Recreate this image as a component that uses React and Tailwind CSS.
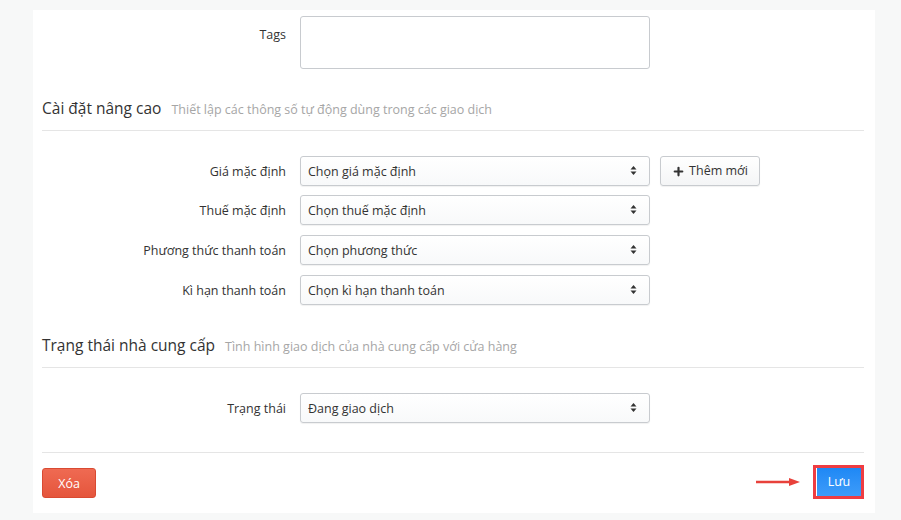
import { Plus } from "lucide-react"

function SelectBox({ value }) {
  return (
    <div className="flex h-[30px] w-[350px] items-center justify-between rounded-[3px] border border-[#c8cbcf] bg-gradient-to-b from-white to-[#f8f9fa] px-[7px] text-[12.5px] text-[#333] shadow-[0_1px_1px_rgba(0,0,0,0.06)]">
      <span className="pt-[3px]">{value}</span>
      <svg width="7" height="11" viewBox="0 0 7 11" className="mr-[5px]">
        <path d="M3.5 1 L6.5 4.5 L0.5 4.5 Z" fill="#333" />
        <path d="M3.5 10 L6.5 6.5 L0.5 6.5 Z" fill="#333" />
      </svg>
    </div>
  )
}

function Row({ label, children, className = "" }) {
  return (
    <div className={"flex items-center " + className}>
      <div className="w-[244px] pt-[4px] text-right text-[12.5px] text-[#333]">{label}</div>
      <div className="ml-[14px] flex items-center gap-[10px]">{children}</div>
    </div>
  )
}

function SectionTitle({ title, sub }) {
  return (
    <div className="flex items-baseline gap-[10px] border-b border-[#e5e5e5] pb-[10px]">
      <span className="text-[15.5px] leading-[22px] text-[#333]">{title}</span>
      <span className="text-[12.5px] text-[#a6a6a6]">{sub}</span>
    </div>
  )
}

export default function App() {
  return (
    <div
      className="h-[520px] w-[901px] bg-[#f7f8f8] pt-[10px] pl-[33px]"
      style={{ fontFamily: "'Open Sans', 'Noto Sans', sans-serif" }}
    >
      <div className="h-[503px] w-[842px] bg-white pt-[6px] pl-[9px] pr-[11px]">
        <div className="flex items-start">
          <div className="w-[244px] pt-[10px] text-right text-[12.5px] text-[#333]">Tags</div>
          <div className="ml-[14px] h-[53px] w-[350px] rounded-[3px] border border-[#c8cbcf] bg-white" />
        </div>

        <div className="mt-[28px]">
          <SectionTitle title="Cài đặt nâng cao" sub="Thiết lập các thông số tự động dùng trong các giao dịch" />
        </div>

        <div className="mt-[25px] flex flex-col gap-[9px]">
          <Row label="Giá mặc định">
            <SelectBox value="Chọn giá mặc định" />
            <button className="flex h-[30px] w-[100px] items-center justify-center gap-[4px] rounded-[3px] border border-[#c8cbcf] bg-gradient-to-b from-white to-[#f4f5f6] pt-[1px] text-[12.5px] text-[#333] shadow-[0_1px_1px_rgba(0,0,0,0.06)]">
              <Plus size={13} strokeWidth={4} />
              Thêm mới
            </button>
          </Row>
          <Row label="Thuế mặc định">
            <SelectBox value="Chọn thuế mặc định" />
          </Row>
          <Row label="Phương thức thanh toán" className="mt-[1px]">
            <SelectBox value="Chọn phương thức" />
          </Row>
          <Row label="Kì hạn thanh toán" className="mt-[1px]">
            <SelectBox value="Chọn kì hạn thanh toán" />
          </Row>
        </div>

        <div className="mt-[29px]">
          <SectionTitle title="Trạng thái nhà cung cấp" sub="Tình hình giao dịch của nhà cung cấp với cửa hàng" />
        </div>

        <div className="mt-[25px] border-b border-[#e5e5e5] pb-[29px]">
          <Row label="Trạng thái">
            <SelectBox value="Đang giao dịch" />
          </Row>
        </div>

        <div className="mt-[12px] flex items-center justify-between">
          <button className="mt-[3px] h-[30px] w-[54px] rounded-[3px] border border-[#d94a32] bg-gradient-to-b from-[#ef6a52] to-[#e5553c] pt-[2px] text-[12.5px] text-white">
            Xóa
          </button>
          <div className="flex items-center gap-[13px]">
            <svg width="44" height="10" viewBox="0 0 44 10">
              <line x1="0" y1="5" x2="34" y2="5" stroke="#e8413b" strokeWidth="2.5" />
              <path d="M33 1 L44 5 L33 9 Z" fill="#e8413b" />
            </svg>
            <div className="border-[3px] border-[#ef3d42] p-0">
              <button className="h-[28px] w-[45px] border-l border-white bg-gradient-to-b from-[#1e88f5] to-[#3d9cf9] pt-[2px] text-[12.5px] text-white">
                Lưu
              </button>
            </div>
          </div>
        </div>
      </div>
    </div>
  )
}
